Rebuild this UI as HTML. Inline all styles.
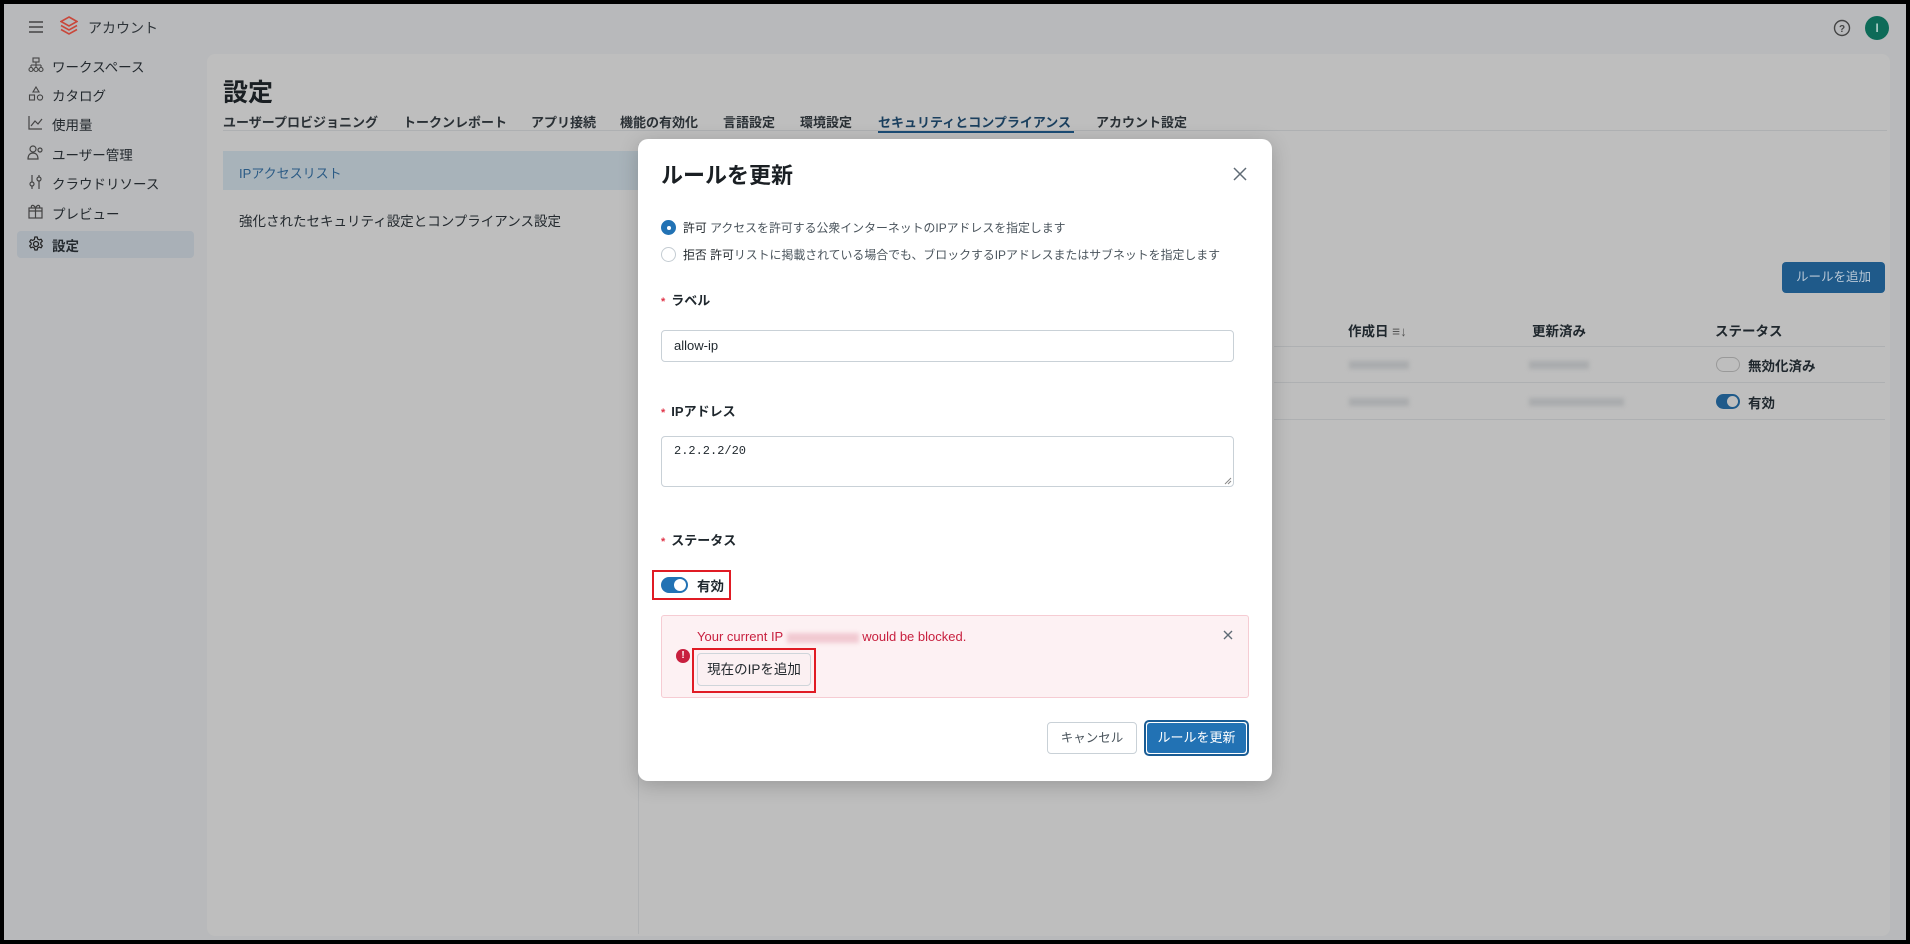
<!DOCTYPE html>
<html><head><meta charset="utf-8"><style>
*{box-sizing:border-box;margin:0;padding:0}
body{width:1910px;height:944px;background:#000;font-family:"Liberation Sans","Noto Sans CJK JP",sans-serif;color:#1f272d;position:relative;overflow:hidden}
.a{position:absolute;white-space:nowrap}
#page{position:absolute;left:4px;top:4px;width:1902px;height:936px;background:#b8b9bb}
.side{font-size:13.5px;color:#23292e}
.tab{font-size:13px;font-weight:bold;color:#2a3035;top:108px}
.modal{position:absolute;left:638px;top:139px;width:634px;height:642px;background:#fff;border-radius:10px;box-shadow:0 4px 20px rgba(0,0,0,.2)}
.m{position:absolute;white-space:nowrap}
.lbl{font-size:13px;font-weight:bold;color:#1f272d}
.lbl b{color:#e0364a;font-size:11px;margin-right:6px}
.inp{position:absolute;left:23px;width:573px;border:1px solid #c9d1d7;border-radius:4px;background:#fff}
</style></head><body>
<div id="page">
<svg class="a" style="left:24px;top:16px" width="16" height="14" viewBox="0 0 16 14"><path d="M1 2h14M1 7h14M1 12h14" stroke="#444" stroke-width="1.6"/></svg>
<svg class="a" style="left:56px;top:12px" width="18" height="20" viewBox="0 0 18 20"><path d="M9 1L17 5.5 9 10 1 5.5z" fill="none" stroke="#c9473a" stroke-width="1.6"/><path d="M1 9.5L9 14 17 9.5M1 13.5L9 18 17 13.5" fill="none" stroke="#c9473a" stroke-width="1.6"/></svg>
<div class="a" style="left:84px;top:14px;font-size:14px;color:#2d3338">アカウント</div>
<svg class="a" style="left:1829px;top:15px" width="18" height="18" viewBox="0 0 18 18"><circle cx="9" cy="9" r="7.5" fill="none" stroke="#444" stroke-width="1.4"/><text x="9" y="13" font-size="10" text-anchor="middle" fill="#444" font-family="Liberation Sans" font-weight="bold">?</text></svg>
<div class="a" style="left:1861px;top:12px;width:24px;height:24px;border-radius:50%;background:#0d6b58;color:#fff;font-size:12px;text-align:center;line-height:24px">I</div>
<!-- sidebar -->
<svg class="a" style="left:24px;top:53px" width="16" height="16"><rect x="5" y="1" width="6" height="4" fill="none" stroke="#444" stroke-width="1.1"/><path d="M8 5v3M3 8h10M3 8v2M8 8v2M13 8v2" fill="none" stroke="#444" stroke-width="1.1"/><circle cx="3" cy="12.5" r="2" fill="none" stroke="#444" stroke-width="1.1"/><circle cx="8" cy="12.5" r="2" fill="none" stroke="#444" stroke-width="1.1"/><circle cx="13" cy="12.5" r="2" fill="none" stroke="#444" stroke-width="1.1"/></svg>
<div class="a side" style="left:48px;top:52px">ワークスペース</div>
<svg class="a" style="left:24px;top:82px" width="16" height="16"><path d="M8 1L11 6H5z" fill="none" stroke="#444" stroke-width="1.1"/><rect x="1.5" y="9" width="5" height="5" fill="none" stroke="#444" stroke-width="1.1"/><circle cx="12" cy="11.5" r="2.6" fill="none" stroke="#444" stroke-width="1.1"/></svg>
<div class="a side" style="left:48px;top:81px">カタログ</div>
<svg class="a" style="left:24px;top:111px" width="15" height="15"><path d="M1 1v13h13M3 11l4-5 3 3 4-5" fill="none" stroke="#444" stroke-width="1.2"/></svg>
<div class="a side" style="left:48px;top:110px">使用量</div>
<svg class="a" style="left:23px;top:141px" width="17" height="15"><circle cx="6" cy="4" r="3" fill="none" stroke="#444" stroke-width="1.2"/><path d="M1 14c0-4 2-6 5-6s5 2 5 6z" fill="none" stroke="#444" stroke-width="1.2"/><circle cx="13" cy="5" r="2" fill="none" stroke="#444" stroke-width="1.2"/></svg>
<div class="a side" style="left:48px;top:140px">ユーザー管理</div>
<svg class="a" style="left:24px;top:170px" width="15" height="16"><path d="M4 1v14M11 1v14" stroke="#444" stroke-width="1.2"/><circle cx="4" cy="10" r="2" fill="#b8b9bb" stroke="#444" stroke-width="1.2"/><circle cx="11" cy="5" r="2" fill="#b8b9bb" stroke="#444" stroke-width="1.2"/></svg>
<div class="a side" style="left:48px;top:169px">クラウドリソース</div>
<svg class="a" style="left:24px;top:199px" width="15" height="16"><rect x="1" y="5" width="13" height="10" fill="none" stroke="#444" stroke-width="1.2"/><path d="M1 8h13M7.5 5v10M7.5 5c-2-4-5-3-4 0M7.5 5c2-4 5-3 4 0" fill="none" stroke="#444" stroke-width="1.2"/></svg>
<div class="a side" style="left:48px;top:199px">プレビュー</div>
<div class="a" style="left:13px;top:227px;width:177px;height:27px;background:#a9b0b7;border-radius:4px"></div>
<svg class="a" style="left:24px;top:232px" width="16" height="16" viewBox="0 0 16 16"><circle cx="8" cy="8" r="2.5" fill="none" stroke="#222" stroke-width="1.3"/><path d="M6.8 1h2.4l.4 2 1.6.9 1.9-.7 1.2 2-1.5 1.4v1.8l1.5 1.4-1.2 2-1.9-.7-1.6.9-.4 2H6.8l-.4-2-1.6-.9-1.9.7-1.2-2 1.5-1.4V7.1L1.7 5.7l1.2-2 1.900.7 1.6-.9z" fill="none" stroke="#222" stroke-width="1.2" stroke-linejoin="round"/></svg>
<div class="a side" style="left:48px;top:231px;font-weight:bold">設定</div>
<!-- main panel -->
<div class="a" style="left:203px;top:50px;width:1683px;height:882px;background:#bebebe;border-radius:8px"></div>
<div class="a" style="left:219px;top:69px;font-size:25px;font-weight:bold;color:#1a1f23">設定</div>
<div class="a tab" style="left:219px">ユーザープロビジョニング</div>
<div class="a tab" style="left:399px">トークンレポート</div>
<div class="a tab" style="left:527px">アプリ接続</div>
<div class="a tab" style="left:616px">機能の有効化</div>
<div class="a tab" style="left:719px">言語設定</div>
<div class="a tab" style="left:796px">環境設定</div>
<div class="a tab" style="left:874px;color:#1a3f5e">セキュリティとコンプライアンス</div>
<div class="a" style="left:874px;top:126px;width:196px;height:3px;background:#1a4c75"></div>
<div class="a tab" style="left:1092px">アカウント設定</div>
<div class="a" style="left:219px;top:126px;width:1664px;height:1px;background:#aeb0b2"></div>
<div class="a" style="left:219px;top:147px;width:415px;height:39px;background:#a8b3ba"></div>
<div class="a" style="left:235px;top:159px;font-size:13px;color:#2b5b85">IPアクセスリスト</div>
<div class="a" style="left:235px;top:206px;font-size:13.5px;color:#23292e">強化されたセキュリティ設定とコンプライアンス設定</div>
<div class="a" style="left:634px;top:140px;width:1px;height:790px;background:#b0b2b4"></div>
<div class="a" style="left:1778px;top:258px;width:103px;height:31px;background:#1f5a8a;border-radius:4px;color:#b9c8d6;font-size:12.5px;text-align:center;line-height:31px">ルールを追加</div>
<div class="a" style="left:1344px;top:316px;font-size:13.5px;font-weight:bold">作成日 <span style="color:#555;font-weight:normal">≡↓</span></div>
<div class="a" style="left:1528px;top:316px;font-size:13.5px;font-weight:bold">更新済み</div>
<div class="a" style="left:1711px;top:316px;font-size:13.5px;font-weight:bold">ステータス</div>
<div class="a" style="left:1270px;top:342px;width:611px;height:1px;background:#aeb0b2"></div>
<div class="a" style="left:1270px;top:378px;width:611px;height:1px;background:#aeb0b2"></div>
<div class="a" style="left:1270px;top:415px;width:611px;height:1px;background:#aeb0b2"></div>
<div class="a" style="left:1345px;top:357px;width:60px;height:8px;background:#a9abad;filter:blur(2px)"></div>
<div class="a" style="left:1525px;top:357px;width:60px;height:8px;background:#a9abad;filter:blur(2px)"></div>
<div class="a" style="left:1345px;top:394px;width:60px;height:8px;background:#a9abad;filter:blur(2px)"></div>
<div class="a" style="left:1525px;top:394px;width:95px;height:8px;background:#a9abad;filter:blur(2px)"></div>
<div class="a" style="left:1712px;top:353px;width:24px;height:15px;border:1px solid #999;border-radius:8px"></div>
<div class="a" style="left:1744px;top:351px;font-size:13.5px;font-weight:bold">無効化済み</div>
<div class="a" style="left:1712px;top:390px;width:24px;height:15px;background:#1f5a8a;border-radius:8px"><div style="position:absolute;right:2px;top:2px;width:11px;height:11px;border-radius:50%;background:#bebebe"></div></div>
<div class="a" style="left:1744px;top:388px;font-size:13.5px;font-weight:bold">有効</div>
</div>
<!-- modal -->
<div class="modal">
<div class="m" style="left:23px;top:19px;font-size:22px;font-weight:bold;color:#1a1f23">ルールを更新</div>
<svg class="m" style="left:595px;top:28px" width="14" height="14"><path d="M1 1l12 12M13 1L1 13" stroke="#5f6b75" stroke-width="1.5"/></svg>
<div class="m" style="left:23px;top:81px;width:15px;height:15px;border-radius:50%;background:#2272b4"><div style="position:absolute;left:5.5px;top:5.5px;width:4px;height:4px;border-radius:50%;background:#fff"></div></div>
<div class="m" style="left:45px;top:80px;font-size:11.9px;color:#23292e">許可 <span style="color:#4a545c">アクセスを許可する公衆インターネットのIPアドレスを指定します</span></div>
<div class="m" style="left:23px;top:108px;width:15px;height:15px;border-radius:50%;border:1px solid #c4ccd2"></div>
<div class="m" style="left:45px;top:107px;font-size:11.9px;color:#23292e">拒否 許可<span style="color:#4a545c">リストに掲載されている場合でも、ブロックするIPアドレスまたはサブネットを指定します</span></div>
<div class="m lbl" style="left:23px;top:151px"><b>*</b>ラベル</div>
<div class="inp" style="top:191px;height:32px"></div>
<div class="m" style="left:36px;top:199px;font-size:13px">allow-ip</div>
<div class="m lbl" style="left:23px;top:262px"><b>*</b>IPアドレス</div>
<div class="inp" style="top:297px;height:51px"></div>
<div class="m" style="left:36px;top:305px;font-size:12px;font-family:'Liberation Mono',monospace">2.2.2.2/20</div>
<svg class="m" style="left:586px;top:338px" width="8" height="8"><path d="M7 1L1 7M7 4L4 7" stroke="#888"/></svg>
<div class="m lbl" style="left:23px;top:391px"><b>*</b>ステータス</div>
<div class="m" style="left:14px;top:431px;width:79px;height:30px;border:2px solid #e01b24"></div>
<div class="m" style="left:23px;top:438px;width:27px;height:16px;background:#2272b4;border-radius:8px"><div style="position:absolute;right:2px;top:2px;width:12px;height:12px;border-radius:50%;background:#fff"></div></div>
<div class="m" style="left:59px;top:436px;font-size:13.5px;font-weight:bold">有効</div>
<div class="m" style="left:23px;top:476px;width:588px;height:83px;background:#fdf1f3;border:1px solid #f6ccd3;border-radius:3px"></div>
<div class="m" style="left:59px;top:490px;font-size:13px;color:#c8203f">Your current IP <span style="display:inline-block;width:72px;height:10px;background:#f1c9d1;filter:blur(2px);vertical-align:middle"></span> would be blocked.</div>
<svg class="m" style="left:585px;top:491px" width="10" height="10"><path d="M1 1l8 8M9 1L1 9" stroke="#5f6b75" stroke-width="1.4"/></svg>
<div class="m" style="left:38px;top:510px;width:14px;height:14px;border-radius:50%;background:#c8203f;color:#fff;font-size:10px;font-weight:bold;text-align:center;line-height:14px">!</div>
<div class="m" style="left:54px;top:509px;width:124px;height:45px;border:2px solid #e01b24"></div>
<div class="m" style="left:59px;top:514px;width:114px;height:33px;background:#fbf0f2;border:1px solid #cfd5da;border-radius:4px;font-size:13.5px;text-align:center;line-height:31px;color:#23292e">現在のIPを追加</div>
<div class="m" style="left:409px;top:583px;width:90px;height:32px;border:1px solid #c9d1d7;border-radius:4px;font-size:12.5px;color:#4a545c;text-align:center;line-height:30px">キャンセル</div>
<div class="m" style="left:506px;top:581px;width:105px;height:36px;border:2px solid #1a5c94;border-radius:5px;padding:1px"><div style="width:100%;height:100%;background:#2272b4;border-radius:3px;color:#fff;font-size:13px;text-align:center;line-height:30px">ルールを更新</div></div>
</div>
</body></html>
